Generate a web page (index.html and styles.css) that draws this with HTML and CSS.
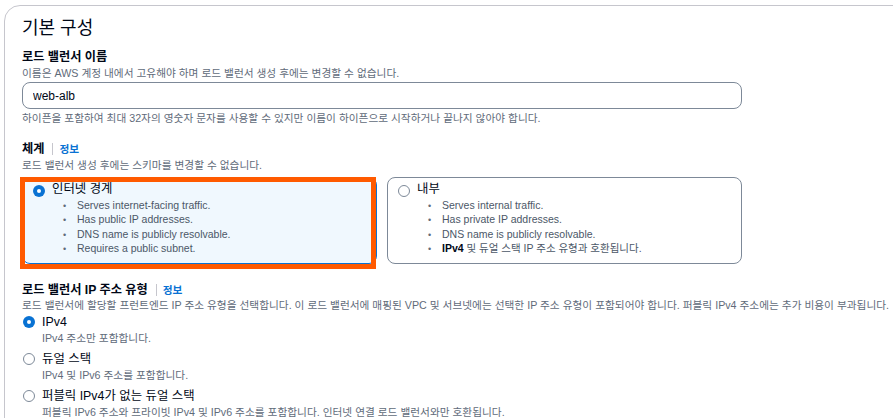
FILE: index.html
```html
<!DOCTYPE html>
<html lang="ko">
<head>
    <meta charset="UTF-8">
    <meta name="viewport" content="width=device-width, initial-scale=1.0">
    <title>로드 밸런서 생성 - 기본 구성</title>
    <link rel="stylesheet" href="styles.css">
</head>
<body>

    <div class="panel">
        <h2>기본 구성</h2>

        <div class="field">
            <label class="field-label" for="lb-name">로드 밸런서 이름</label>
            <p class="field-desc">이름은 AWS 계정 내에서 고유해야 하며 로드 밸런서 생성 후에는 변경할 수 없습니다.</p>
            <input type="text" id="lb-name" class="text-input" value="web-alb" />
            <p class="field-hint">하이픈을 포함하여 최대 32자의 영숫자 문자를 사용할 수 있지만 이름이 하이픈으로 시작하거나 끝나지 않아야 합니다.</p>
        </div>

        <div class="field scheme">
            <div class="field-label">체계 <span class="divider"></span><a class="info" href="#">정보</a></div>
            <p class="field-desc">로드 밸런서 생성 후에는 스키마를 변경할 수 없습니다.</p>

            <div class="tiles">
                <div class="tile selected">
                    <div class="tile-title"><span class="radio checked"></span>인터넷 경계</div>
                    <ul class="tile-list">
                        <li>Serves internet-facing traffic.</li>
                        <li>Has public IP addresses.</li>
                        <li>DNS name is publicly resolvable.</li>
                        <li>Requires a public subnet.</li>
                    </ul>
                    <!-- highlight drawn over the selected tile -->
                    <div class="highlight"></div>
                </div>
                <div class="tile">
                    <div class="tile-title"><span class="radio"></span>내부</div>
                    <ul class="tile-list">
                        <li>Serves internal traffic.</li>
                        <li>Has private IP addresses.</li>
                        <li>DNS name is publicly resolvable.</li>
                        <li><b>IPv4</b> 및 듀얼 스택 IP 주소 유형과 호환됩니다.</li>
                    </ul>
                </div>
            </div>
        </div>

        <div class="field ip-type">
            <div class="field-label">로드 밸런서 IP 주소 유형 <span class="divider"></span><a class="info" href="#">정보</a></div>
            <p class="field-desc">로드 밸런서에 할당할 프런트엔드 IP 주소 유형을 선택합니다. 이 로드 밸런서에 매핑된 VPC 및 서브넷에는 선택한 IP 주소 유형이 포함되어야 합니다. 퍼블릭 IPv4 주소에는 추가 비용이 부과됩니다.</p>

            <div class="option">
                <div class="option-title"><span class="radio checked"></span>IPv4</div>
                <p class="option-desc">IPv4 주소만 포함합니다.</p>
            </div>
            <div class="option">
                <div class="option-title"><span class="radio"></span>듀얼 스택</div>
                <p class="option-desc">IPv4 및 IPv6 주소를 포함합니다.</p>
            </div>
            <div class="option">
                <div class="option-title"><span class="radio"></span>퍼블릭 IPv4가 없는 듀얼 스택</div>
                <p class="option-desc">퍼블릭 IPv6 주소와 프라이빗 IPv4 및 IPv6 주소를 포함합니다. 인터넷 연결 로드 밸런서와만 호환됩니다.</p>
            </div>
        </div>
    </div>

</body>
</html>
```

FILE: styles.css
```css
/* Reset */
* {
    margin: 0;
    padding: 0;
    box-sizing: border-box;
}

body {
    font-family: 'Liberation Sans', 'Noto Sans CJK KR', sans-serif;
    background-color: #ffffff;
    color: #000716;
    overflow: hidden;
}

/* Container panel */
.panel {
    width: 1000px;
    margin: 5px 0 0 4px;
    padding: 11px 17px 30px;
    border: 1px solid #c6c6cd;
    border-radius: 16px;
}

h2 {
    font-size: 18px;
    line-height: 23px;
    font-weight: 400;
    margin-bottom: 9px;
}

/* Fields */
.field-label {
    display: flex;
    align-items: center;
    font-size: 12.2px;
    line-height: 16px;
    font-weight: 700;
}

.divider {
    display: inline-block;
    width: 1px;
    height: 12px;
    margin: 0 6px 0 8px;
    background-color: #c6c6cd;
}

.info {
    font-size: 10.7px;
    font-weight: 700;
    color: #0972d3;
    text-decoration: none;
}

.field-desc,
.field-hint,
.option-desc {
    font-size: 10.7px;
    line-height: 14px;
    color: #5f6b7a;
    white-space: nowrap;
}

.field-desc {
    margin-top: 1px;
}

.text-input {
    display: block;
    width: 720px;
    height: 27px;
    margin-top: 2px;
    padding: 0 10px;
    border: 1px solid #7d8998;
    border-radius: 8px;
    font-family: inherit;
    font-size: 12px;
    color: #000716;
    outline: none;
}

.field-hint {
    margin-top: 2px;
}

.scheme {
    margin-top: 16px;
}

.scheme .field-desc {
    margin-top: 1px;
}

/* Tiles */
.tiles {
    display: grid;
    grid-template-columns: 1fr 1fr;
    gap: 10px;
    width: 720px;
    margin-top: 5px;
}

.tile {
    position: relative;
    height: 87px;
    padding: 3px 10px 0;
    border: 1px solid #7d8998;
    border-radius: 8px;
    background-color: #ffffff;
}

.tile.selected {
    border-color: #0972d3;
    background-color: #f0f8fe;
}

.tile-title,
.option-title {
    display: flex;
    align-items: center;
    gap: 7px;
    font-size: 12.4px;
    line-height: 16px;
}

.tile-title .radio {
    margin-top: 3px;
}

.tile-list {
    list-style: none;
    margin-top: 2px;
    padding-left: 44px;
    font-size: 10.5px;
    line-height: 13.3px;
    color: #4b5767;
}

.tile-list li::before {
    content: "\2022";
    display: inline-block;
    width: 14px;
    margin-left: -14px;
    font-size: 9px;
    color: #5f6b7a;
}

.tile-list b {
    color: #000716;
}

/* Orange annotation box over the selected tile */
.highlight {
    position: absolute;
    left: -3px;
    top: -1px;
    width: 356px;
    height: 92px;
    border: 5px solid #ff5a00;
}

/* Radio buttons */
.radio {
    display: inline-block;
    flex: none;
    width: 12px;
    height: 12px;
    border: 1.5px solid #7d8998;
    border-radius: 50%;
    background-color: #ffffff;
}

.radio.checked {
    border: none;
    box-shadow: inset 0 0 0 4px #0972d3;
}

/* IP address type */
.ip-type {
    margin-top: 18px;
}

.ip-type .field-desc {
    margin-top: 0;
}

.option {
    margin-top: 2px;
}

.option + .option {
    margin-top: 6px;
}

.option-title {
    padding-left: 1px;
}

.option-desc {
    padding-left: 20px;
    margin-top: 1px;
}
```
